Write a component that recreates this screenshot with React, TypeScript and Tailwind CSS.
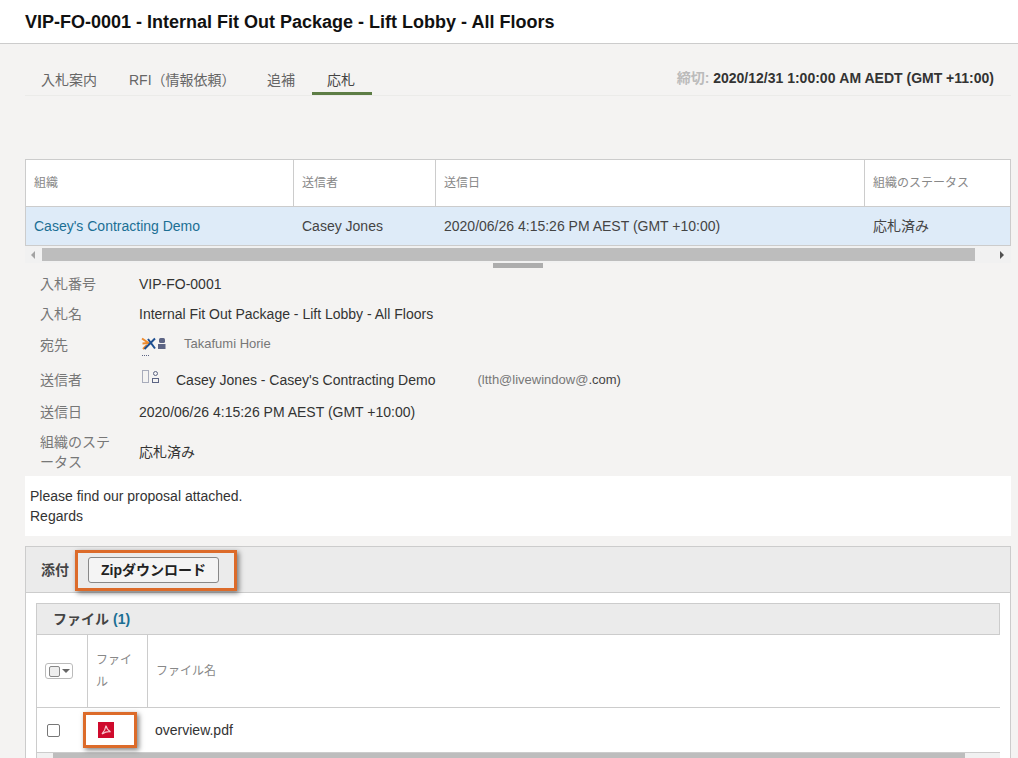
const FONT = "font-['Liberation_Sans','Noto_Sans_CJK_JP',sans-serif]"

function Tabs() {
  return (
    <div className="mx-[25px] mt-[21px] mr-[7px] flex h-[31px] items-start justify-between border-b border-[#ebebe9]">
      <div className="flex text-sm text-[#666]">
        <div className="h-[30px] w-[88px] pl-[16px] pt-[5px]">入札案内</div>
        <div className="h-[30px] w-[138px] pl-[16px] pt-[5px]">RFI（情報依頼）</div>
        <div className="h-[30px] w-[61px] pl-[16px] pt-[5px]">追補</div>
        <div className="h-[30px] w-[60px] border-b-[3px] border-[#5d7d45] pl-[15px] pt-[5px] text-[#444]">応札</div>
      </div>
      <div className="mr-[17px] pt-[3px] text-sm font-bold text-[#333]">
        <span className="text-[#bbb]">締切:</span> 2020/12/31 1:00:00 AM AEDT (GMT +11:00)
      </div>
    </div>
  )
}

function ResponseTable() {
  return (
    <div className="mx-[25px] mt-[62px] mr-[7px]">
      <div className="border border-[#ccc] text-sm">
        <div className="grid h-[47px] grid-cols-[268px_142px_429px_1fr] border-b border-[#ccc] bg-white text-xs text-[#888]">
          <div className="flex items-center border-r border-[#ccc] pl-[8px]">組織</div>
          <div className="flex items-center border-r border-[#ccc] pl-[8px]">送信者</div>
          <div className="flex items-center border-r border-[#ccc] pl-[8px]">送信日</div>
          <div className="flex items-center pl-[8px]">組織のステータス</div>
        </div>
        <div className="grid h-[38px] grid-cols-[268px_142px_429px_1fr] bg-[#deebf8] text-[#444]">
          <div className="flex items-center pl-[8px] text-[#1b6f94]">Casey's Contracting Demo</div>
          <div className="flex items-center pl-[8px]">Casey Jones</div>
          <div className="flex items-center pl-[8px]">2020/06/26 4:15:26 PM AEST (GMT +10:00)</div>
          <div className="flex items-center pl-[8px]">応札済み</div>
        </div>
      </div>
      <div className="flex h-[17px] items-center bg-[#f1f1f1]">
        <span className="ml-[6px] h-0 w-0 border-y-[4px] border-r-[4px] border-y-transparent border-r-[#a3a3a3]" />
        <div className="ml-[7px] h-[13px] w-[933px] bg-[#bdbdbd]" />
        <span className="ml-[25px] h-0 w-0 border-y-[4px] border-l-[4px] border-y-transparent border-l-[#505050]" />
      </div>
      <div className="flex justify-center">
        <div className="h-[5px] w-[50px] bg-[#adadad]" />
      </div>
    </div>
  )
}

function Field({ label, children, className }: { label: React.ReactNode; children: React.ReactNode; className: string }) {
  return (
    <div className={`flex items-center text-sm ${className}`}>
      <div className="mr-[19px] w-[80px] shrink-0 leading-[20px] text-[#777]">{label}</div>
      <div className="flex items-center text-[#333]">{children}</div>
    </div>
  )
}

function LogoIcons() {
  return (
    <svg width="30" height="26" viewBox="0 0 30 26" className="ml-[2px] shrink-0">
      <path d="M1 6.5 L7.5 11 L1.5 11.5 M2 17 L6 13" stroke="#ee8a2c" strokeWidth="2" fill="none" />
      <path d="M14 6.5 L3.5 17 M7 7 L14 16.5" stroke="#1d4f91" strokeWidth="2" fill="none" />
      <rect x="18" y="6" width="6" height="5" rx="1.5" fill="#5c6484" />
      <rect x="17" y="12" width="7.5" height="5" fill="#5c6484" />
      <path d="M1 23.5 H8" stroke="#5c6484" strokeWidth="1" strokeDasharray="1 1" />
    </svg>
  )
}

function SenderIcons() {
  return (
    <svg width="22" height="16" viewBox="0 0 22 16" className="ml-[2px] shrink-0 -translate-y-[3px]">
      <rect x="1.5" y="1.5" width="6" height="12" fill="none" stroke="#5c6484" strokeWidth="1" strokeDasharray="1 1" />
      <circle cx="14.5" cy="4.5" r="2" fill="none" stroke="#5c6484" />
      <rect x="11.5" y="9.5" width="6" height="4" fill="none" stroke="#5c6484" />
    </svg>
  )
}

function Details() {
  return (
    <div className="ml-[40px] mt-px">
      <Field label="入札番号" className="h-[30px]">VIP-FO-0001</Field>
      <Field label="入札名" className="h-[30px]">Internal Fit Out Package - Lift Lobby - All Floors</Field>
      <Field label="宛先" className="h-[32px]">
        <LogoIcons />
        <span className="ml-[13px] -translate-y-px text-[13px] text-[#777]">Takafumi Horie</span>
      </Field>
      <Field label="送信者" className="h-[38px]">
        <SenderIcons />
        <span className="ml-[13px]">Casey Jones - Casey's Contracting Demo</span>
        <span className="ml-[42px] text-[13px] text-[#777]">(ltth@livewindow@<span className="text-[#444]">.com)</span></span>
      </Field>
      <Field label="送信日" className="h-[26px]">2020/06/26 4:15:26 PM AEST (GMT +10:00)</Field>
      <Field label="組織のステータス" className="mt-[7px] h-[40px]">応札済み</Field>
    </div>
  )
}

function PdfIcon() {
  return (
    <svg width="16" height="16" viewBox="0 0 16 16" className="block">
      <rect width="16" height="16" fill="#cf0a2c" />
      <path d="M8 3.5 C7.6 6.5 6.5 9 4 12 C6.5 10.5 9.5 9.2 12.5 9.8 C10 8.5 8.5 6 8 3.5 Z" fill="none" stroke="#f7c5cd" strokeWidth="1.2" />
    </svg>
  )
}

function Attachments() {
  return (
    <div className="relative ml-[25px] mr-[7px] mt-[10px] border-x border-t border-[#ccc] bg-white">
      <div className="flex h-[46px] items-center border-b border-[#ccc] bg-[#ebebeb] pl-[15px]">
        <span className="text-sm font-bold text-[#444]">添付</span>
        <button className="ml-[19px] h-[26px] w-[131px] rounded-[3px] border border-[#888] bg-[#f4f4f4] text-sm font-bold text-[#222]">
          Zipダウンロード
        </button>
      </div>
      <div className="ml-[10px] mr-[10px] mt-[10px]">
        <div className="flex h-[32px] items-center border border-[#ccc] bg-[#ebebeb] pl-[16px] text-sm font-bold text-[#444]">
          ファイル<span className="ml-[4px] text-[#1b6f94]">(1)</span>
        </div>
        <div className="grid h-[73px] grid-cols-[51px_60px_1fr] border-b border-l border-[#ccc] text-xs text-[#888]">
          <div className="flex items-center border-r border-[#ccc] pl-[8px]">
            <div className="flex h-[16px] w-[28px] items-center gap-[2px] rounded-[3px] border border-[#bbb] pl-[3px]">
              <span className="h-[11px] w-[11px] rounded-[2px] border border-[#888] bg-[#eee]" />
              <span className="h-0 w-0 border-x-[4px] border-t-[4px] border-x-transparent border-t-[#666]" />
            </div>
          </div>
          <div className="flex items-center border-r border-[#ccc] px-[8px] leading-[22px]">ファイル</div>
          <div className="flex items-center pl-[8px]">ファイル名</div>
        </div>
        <div className="grid h-[45px] grid-cols-[51px_60px_1fr] border-b border-l border-[#ccc] text-sm text-[#333]">
          <div className="flex items-center pl-[10px]">
            <span className="h-[13px] w-[13px] rounded-[2px] border border-[#777] bg-white" />
          </div>
          <div className="flex items-center pl-[10px]">
            <PdfIcon />
          </div>
          <div className="flex items-center pl-[7px]">overview.pdf</div>
        </div>
        <div className="flex h-[6px] border-l border-[#ccc] bg-[#f1f1f1] pl-[16px]">
          <div className="h-full w-[912px] bg-[#bdbdbd]" />
        </div>
      </div>
      {/* annotation boxes */}
      <div className="absolute left-[49px] top-[3px] h-[41px] w-[162px] border-[3px] border-[#dc6b2a] shadow-[2px_2px_5px_rgba(0,0,0,0.5)]" />
      <div className="absolute left-[57px] top-[165px] h-[36px] w-[54px] border-[3px] border-[#dc6b2a] shadow-[2px_2px_5px_rgba(0,0,0,0.5)]" />
    </div>
  )
}

export default function App() {
  return (
    <div className={`h-[758px] overflow-hidden bg-[#f4f3f2] ${FONT}`}>
      <div className="flex h-[44px] items-center border-b border-[#ccc] bg-white pl-[25px] text-lg font-bold text-[#111]">
        VIP-FO-0001 - Internal Fit Out Package - Lift Lobby - All Floors
      </div>
      <Tabs />
      <div className="h-px" />
      <ResponseTable />
      <Details />
      <div className="ml-[25px] mr-[7px] mt-[4px] h-[60px] bg-white pl-[5px] pt-[10px] text-sm leading-[20px] text-[#333]">
        <div>Please find our proposal attached.</div>
        <div>Regards</div>
      </div>
      <Attachments />
    </div>
  )
}
